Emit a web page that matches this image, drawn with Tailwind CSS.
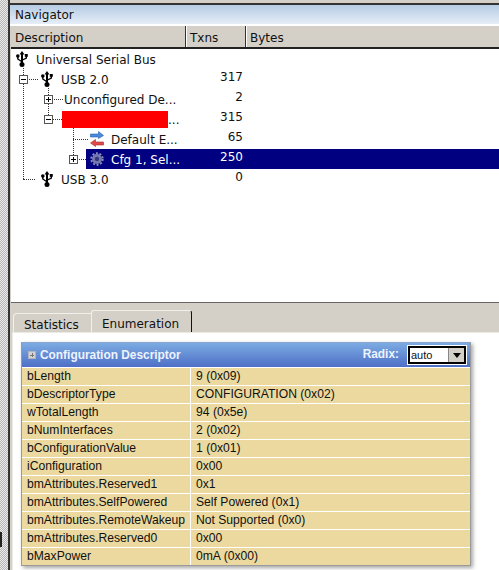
<!DOCTYPE html>
<html lang="en">
<head>
  <meta charset="utf-8"/>
  <title>Navigator</title>
  <script src="https://cdn.jsdelivr.net/npm/@tailwindcss/browser@4"></script>
</head>
<body class="w-[499px] h-[570px] overflow-hidden bg-[#d4d0c8] font-['DejaVu_Sans',sans-serif] text-[12px] text-[#111]">
  <svg class="hidden">
    <defs>
      <symbol id="usb" viewBox="0 0 12 16">
        <path d="M6 0 L8.500 3.500 H7 V12 H5 V3.500 H3.500 Z" fill="#000"/>
        <circle cx="6" cy="13.500" r="2.500" fill="#000"/>
        <path d="M5.500 10.500 L1.800 8 V5.500 M6.500 9 L10.300 7 V5" stroke="#000" stroke-width="1.400" fill="none"/>
        <circle cx="1.800" cy="5" r="1.800" fill="#000"/>
        <rect x="8.800" y="3" width="3" height="2.800" fill="#000"/>
      </symbol>
    </defs>
  </svg>

  <div class="flex h-full relative">
    <div class="w-[8px] shrink-0 bg-[conic-gradient(#b4b4b4_25%,#ececec_0_50%,#b4b4b4_0_75%,#ececec_0)] bg-[length:2px_2px]"></div>
    <div class="absolute left-0 top-[532px] w-[2px] h-[15px] bg-[#222]"></div>
    <div class="w-[2px] shrink-0 bg-[#333]"></div>
    <div class="flex-1 min-w-0 flex flex-col">
      <!-- top pane -->
      <div class="h-[3px]"></div>
      <div class="h-[2px] bg-[#333]"></div>
      <div class="h-[19px] flex items-center pl-[5px] bg-gradient-to-b from-[#b6cbe3] to-[#e6eef8]">Navigator</div>
      <div class="h-[2px] bg-white"></div>
      <div class="flex h-[23px] ml-[1px] border-b-2 border-[#222]">
        <div class="w-[175px] pl-[4px] pt-[2px] flex items-center border-r border-[#333]">Description</div>
        <div class="w-[60px] pl-[3px] pt-[2px] flex items-center border-l border-r border-l-white border-r-[#333]">Txns</div>
        <div class="flex-1 pl-[3px] pt-[2px] flex items-center border-l border-white">Bytes</div>
      </div>
      <div class="h-[253px] ml-[1px] bg-white relative">
        <div class="h-[20px] flex items-center pl-[5px]">
          <svg class="w-[12px] h-[16px]"><use href="#usb"/></svg>
          <span class="ml-[8px] mt-[2px]">Universal Serial Bus</span>
        </div>
        <div class="h-[20px] flex items-center">
          <div class="w-[175px] pl-[30px] flex items-center">
            <svg class="w-[12px] h-[16px]"><use href="#usb"/></svg>
            <span class="ml-[8px] mt-[2px]">USB 2.0</span>
          </div>
          <span class="w-[57px] text-right pb-[4px]">317</span>
        </div>
        <div class="h-[20px] flex items-center">
          <span class="w-[175px] pl-[53px] mt-[2px]">Unconfigured De...</span>
          <span class="w-[57px] text-right pb-[4px]">2</span>
        </div>
        <div class="h-[20px] flex items-center">
          <div class="w-[175px] pl-[51px] flex items-center">
            <div class="w-[106px] h-[17px] bg-[#ff0000]"></div><span class="mt-[2px]">...</span>
          </div>
          <span class="w-[57px] text-right pb-[4px]">315</span>
        </div>
        <div class="h-[20px] flex items-center">
          <div class="w-[175px] pl-[79px] flex items-center">
            <svg class="w-[14px] h-[16px]" viewBox="0 0 14 16">
              <path d="M.5 3 H8.500 V.5 L13.500 4.500 L8.500 7.500 V6 H.5 Z" fill="#4a8be0" stroke="#2a5aa8" stroke-width=".6"/>
              <path d="M13.500 11 H5.500 V8.500 L.5 12 L5.500 15.500 V14 H13.500 Z" fill="#e04a4a" stroke="#a82a2a" stroke-width=".6"/>
            </svg>
            <span class="ml-[7px] mt-[2px]">Default E...</span>
          </div>
          <span class="w-[57px] text-right pb-[4px]">65</span>
        </div>
        <div class="h-[20px] ml-[75px] flex items-center bg-[#000080] text-white">
          <div class="w-[100px] pl-[4px] flex items-center">
            <svg class="w-[14px] h-[14px]" viewBox="0 0 14 14">
              <circle cx="7" cy="7" r="5" fill="#7579ad"/>
              <circle cx="7" cy="7" r="5.800" fill="none" stroke="#8d90bc" stroke-width="1.800" stroke-dasharray="2 1.640"/>
              <circle cx="7" cy="7" r="2.200" fill="#34387f"/>
            </svg>
            <span class="ml-[7px] mt-[2px]">Cfg 1, Sel...</span>
          </div>
          <span class="w-[57px] text-right pb-[4px]">250</span>
        </div>
        <div class="h-[20px] flex items-center">
          <div class="w-[175px] pl-[30px] flex items-center">
            <svg class="w-[12px] h-[16px]"><use href="#usb"/></svg>
            <span class="ml-[8px] mt-[2px]">USB 3.0</span>
          </div>
          <span class="w-[57px] text-right pb-[4px]">0</span>
        </div>

        <!-- tree guide lines and expanders over the rows -->
        <div class="absolute left-[12px] top-[19px] h-[111px] border-l border-dotted border-[#333]"></div>
        <div class="absolute left-[12px] top-[130px] w-[12px] border-t border-dotted border-[#333]"></div>
        <div class="absolute left-[12px] top-[30px] w-[15px] border-t border-dotted border-[#333]"></div>
        <div class="absolute left-[37px] top-[39px] h-[27px] border-l border-dotted border-[#333]"></div>
        <div class="absolute left-[37px] top-[50px] w-[15px] border-t border-dotted border-[#333]"></div>
        <div class="absolute left-[37px] top-[70px] w-[14px] border-t border-dotted border-[#333]"></div>
        <div class="absolute left-[62px] top-[79px] h-[27px] border-l border-dotted border-[#333]"></div>
        <div class="absolute left-[62px] top-[90px] w-[15px] border-t border-dotted border-[#333]"></div>
        <div class="absolute left-[62px] top-[110px] w-[13px] border-t border-dotted border-[#333]"></div>

        <div class="absolute left-[8px] top-[26px] w-[9px] h-[9px] border border-[#555] bg-white flex items-center justify-center"><div class="w-[5px] h-[1px] bg-black"></div></div>
        <div class="absolute left-[33px] top-[46px] w-[9px] h-[9px] border border-[#555] bg-white flex items-center justify-center"><div class="w-[5px] h-[1px] bg-black"></div><div class="absolute w-[1px] h-[5px] bg-black"></div></div>
        <div class="absolute left-[33px] top-[66px] w-[9px] h-[9px] border border-[#555] bg-white flex items-center justify-center"><div class="w-[5px] h-[1px] bg-black"></div></div>
        <div class="absolute left-[58px] top-[106px] w-[9px] h-[9px] border border-[#555] bg-white flex items-center justify-center"><div class="w-[5px] h-[1px] bg-black"></div><div class="absolute w-[1px] h-[5px] bg-black"></div></div>
      </div>
      <div class="h-[1px] ml-[1px] bg-[#666]"></div>

      <!-- bottom pane -->
      <div class="flex-1 min-h-0 flex flex-col">
        <div class="h-[29px] pl-[3px] flex items-end">
          <div class="w-[78px] h-[19px] pl-[10px] pt-[3px] flex items-center bg-[#d4d0c8] border-l border-t border-[#f2f0ea] rounded-tl-[4px]">Statistics</div>
          <div class="w-[101px] h-[22px] pl-[10px] pt-[5px] flex items-center bg-[#d4d0c8] border-l border-t border-[#f2f0ea] border-r border-r-[#111] rounded-t-[3px]">Enumeration</div>
        </div>
        <div class="flex-1 min-h-0 ml-[2px] pt-[9px] pl-[8px] bg-white border-t border-l border-[#eceae4] font-['Liberation_Sans',sans-serif] text-[12.15px]">
          <div class="w-[450px] border border-[#9a9a9a] border-t-[#8aa4cf] shadow-[2px_2px_4px_rgba(0,0,0,0.35)]">
            <div class="h-[24px] pl-[6px] pr-[3px] flex items-center bg-gradient-to-b from-[#7cabe2] to-[#4f6fc6] text-[#eef3ff] font-bold text-[11.9px]">
              <div class="w-[8px] h-[8px] bg-[#d2d2d2] border border-[#b0b4c0] flex items-center justify-center relative"><div class="w-[4px] h-[1px] bg-[#777]"></div><div class="absolute w-[1px] h-[4px] bg-[#777]"></div></div>
              <span class="ml-[4px] mt-[2px]">Configuration Descriptor</span>
              <span class="ml-auto">Radix:</span>
              <div class="ml-[8px] w-[60px] h-[20px] bg-white p-[1px]">
                <div class="h-full border-2 border-black bg-white flex items-center font-normal text-[11px] text-[#111]">
                  <span class="pl-[1px] flex-1">auto</span>
                  <div class="w-[16px] h-full bg-[#d4d0c8] border-l border-[#888] flex items-center justify-center">
                    <svg class="w-[8px] h-[5px]" viewBox="0 0 8 5"><path d="M0 0 H8 L4 5 Z" fill="#000"/></svg>
                  </div>
                </div>
              </div>
            </div>
            <div class="bg-[#ebd9a0]">
              <div class="h-[18px] pb-[1px] flex items-center border-t border-white"><div class="w-[169px] h-[18px] pl-[5px] flex items-center border-r border-white">bLength</div><div class="pl-[5px]">9 (0x09)</div></div>
              <div class="h-[18px] pb-[1px] flex items-center border-t border-white"><div class="w-[169px] h-[18px] pl-[5px] flex items-center border-r border-white">bDescriptorType</div><div class="pl-[5px]">CONFIGURATION (0x02)</div></div>
              <div class="h-[18px] pb-[1px] flex items-center border-t border-white"><div class="w-[169px] h-[18px] pl-[5px] flex items-center border-r border-white">wTotalLength</div><div class="pl-[5px]">94 (0x5e)</div></div>
              <div class="h-[18px] pb-[1px] flex items-center border-t border-white"><div class="w-[169px] h-[18px] pl-[5px] flex items-center border-r border-white">bNumInterfaces</div><div class="pl-[5px]">2 (0x02)</div></div>
              <div class="h-[18px] pb-[1px] flex items-center border-t border-white"><div class="w-[169px] h-[18px] pl-[5px] flex items-center border-r border-white">bConfigurationValue</div><div class="pl-[5px]">1 (0x01)</div></div>
              <div class="h-[18px] pb-[1px] flex items-center border-t border-white"><div class="w-[169px] h-[18px] pl-[5px] flex items-center border-r border-white">iConfiguration</div><div class="pl-[5px]">0x00</div></div>
              <div class="h-[18px] pb-[1px] flex items-center border-t border-white"><div class="w-[169px] h-[18px] pl-[5px] flex items-center border-r border-white">bmAttributes.Reserved1</div><div class="pl-[5px]">0x1</div></div>
              <div class="h-[18px] pb-[1px] flex items-center border-t border-white"><div class="w-[169px] h-[18px] pl-[5px] flex items-center border-r border-white">bmAttributes.SelfPowered</div><div class="pl-[5px]">Self Powered (0x1)</div></div>
              <div class="h-[18px] pb-[1px] flex items-center border-t border-white"><div class="w-[169px] h-[18px] pl-[5px] flex items-center border-r border-white">bmAttributes.RemoteWakeup</div><div class="pl-[5px]">Not Supported (0x0)</div></div>
              <div class="h-[18px] pb-[1px] flex items-center border-t border-white"><div class="w-[169px] h-[18px] pl-[5px] flex items-center border-r border-white">bmAttributes.Reserved0</div><div class="pl-[5px]">0x00</div></div>
              <div class="h-[18px] pb-[1px] flex items-center border-t border-white"><div class="w-[169px] h-[18px] pl-[5px] flex items-center border-r border-white">bMaxPower</div><div class="pl-[5px]">0mA (0x00)</div></div>
            </div>
          </div>
        </div>
      </div>
    </div>
  </div>
</body>
</html>
